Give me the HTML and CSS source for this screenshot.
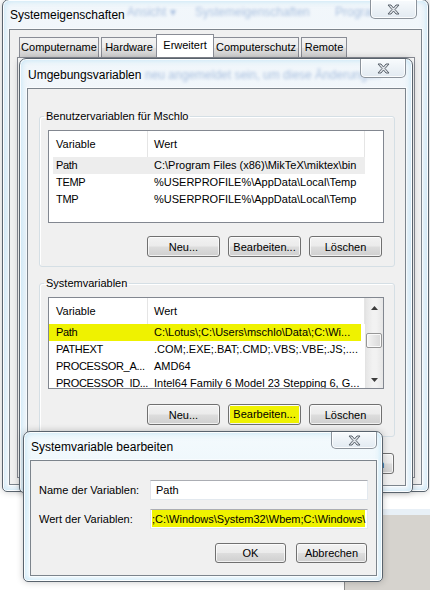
FILE: index.html
```html
<!DOCTYPE html>
<html lang="de">
<head>
  <meta charset="UTF-8">
  <meta name="viewport" content="width=device-width, initial-scale=1.0">
  <title>Umgebungsvariablen</title>
  <link rel="stylesheet" href="styles.css">
</head>
<body>
  <!-- window lying behind, lower right -->
  <div class="back-window"></div>

  <!-- Systemeigenschaften -->
  <div class="window sys-window">
    <div class="titlebar">
      <span class="title">Systemeigenschaften</span>
      <span class="ghost" style="left: 118px; top: 5px;">Ansicht ▾</span>
      <span class="ghost" style="left: 186px; top: 5px;">Systemeigenschaften</span>
      <span class="ghost" style="left: 326px; top: 5px;">Programme</span>
      <div class="close-btn">
        <svg width="13" height="11" viewBox="0 0 13 11"><path d="M1 1h3l2.5 3 2.5-3h3l-4 4.5 4 4.5h-3l-2.5-3-2.5 3h-3l4-4.5z"/></svg>
      </div>
    </div>
    <div class="client">
      <div class="tabs">
        <div class="tab tab-name">Computername</div>
        <div class="tab tab-hw">Hardware</div>
        <div class="tab tab-adv active">Erweitert</div>
        <div class="tab tab-prot">Computerschutz</div>
        <div class="tab tab-remote">Remote</div>
      </div>
      <div class="tab-panel"></div>
    </div>
  </div>

  <!-- Umgebungsvariablen -->
  <div class="window env-window">
    <div class="titlebar">
      <span class="title">Umgebungsvariablen</span>
      <span class="ghost" style="left: 118px; top: 9px;">neu angemeldet sein, um diese Änderungen</span>
      <div class="close-btn">
        <svg width="13" height="11" viewBox="0 0 13 11"><path d="M1 1h3l2.5 3 2.5-3h3l-4 4.5 4 4.5h-3l-2.5-3-2.5 3h-3l4-4.5z"/></svg>
      </div>
    </div>
    <div class="client env-client">
      <fieldset class="group">
        <legend>Benutzervariablen für Mschlo</legend>
        <div class="listview">
          <div class="lv-main">
            <div class="lv-header">
              <div class="lv-col col-name">Variable</div>
              <div class="lv-col col-value">Wert</div>
              <div class="lv-col col-rest"></div>
            </div>
            <div class="lv-row selected"><span class="cell-name">Path</span><span class="cell-value">C:\Program Files (x86)\MikTeX\miktex\bin</span></div>
            <div class="lv-row"><span class="cell-name">TEMP</span><span class="cell-value">%USERPROFILE%\AppData\Local\Temp</span></div>
            <div class="lv-row"><span class="cell-name">TMP</span><span class="cell-value">%USERPROFILE%\AppData\Local\Temp</span></div>
          </div>
        </div>
        <div class="button-row">
          <button class="btn">Neu...</button>
          <button class="btn">Bearbeiten...</button>
          <button class="btn">Löschen</button>
        </div>
      </fieldset>

      <fieldset class="group group-system">
        <legend>Systemvariablen</legend>
        <div class="listview">
          <div class="lv-main">
            <div class="lv-header">
              <div class="lv-col col-name">Variable</div>
              <div class="lv-col col-value">Wert</div>
            </div>
            <div class="lv-row marked"><span class="cell-name">Path</span><span class="cell-value">C:\Lotus\;C:\Users\mschlo\Data\;C:\Wi...</span></div>
            <div class="lv-row"><span class="cell-name">PATHEXT</span><span class="cell-value">.COM;.EXE;.BAT;.CMD;.VBS;.VBE;.JS;....</span></div>
            <div class="lv-row"><span class="cell-name">PROCESSOR_A...</span><span class="cell-value">AMD64</span></div>
            <div class="lv-row"><span class="cell-name">PROCESSOR_ID...</span><span class="cell-value">Intel64 Family 6 Model 23 Stepping 6, G...</span></div>
          </div>
          <div class="scrollbar">
            <div class="sb-arrow sb-up">
              <svg width="7" height="4" viewBox="0 0 7 4"><path d="M0 4h7L3.5 0z"/></svg>
            </div>
            <div class="sb-track">
              <div class="sb-thumb"></div>
            </div>
            <div class="sb-arrow sb-down">
              <svg width="7" height="4" viewBox="0 0 7 4"><path d="M0 0h7L3.5 4z"/></svg>
            </div>
          </div>
        </div>
        <div class="button-row">
          <button class="btn">Neu...</button>
          <button class="btn"><span class="marker">Bearbeiten...</span></button>
          <button class="btn">Löschen</button>
        </div>
      </fieldset>

      <div class="dialog-buttons env-buttons">
        <button class="btn">OK</button>
        <button class="btn">Abbrechen</button>
      </div>
    </div>
  </div>

  <!-- Systemvariable bearbeiten -->
  <div class="window edit-window">
    <div class="titlebar">
      <span class="title">Systemvariable bearbeiten</span>
      <div class="close-btn">
        <svg width="13" height="11" viewBox="0 0 13 11"><path d="M1 1h3l2.5 3 2.5-3h3l-4 4.5 4 4.5h-3l-2.5-3-2.5 3h-3l4-4.5z"/></svg>
      </div>
    </div>
    <div class="client edit-client">
      <div class="field-row">
        <label class="field-label">Name der Variablen:</label>
        <div class="textbox">Path</div>
      </div>
      <div class="field-row">
        <label class="field-label">Wert der Variablen:</label>
        <div class="textbox"><span class="marker value-marker">;C:\Windows\System32\Wbem;C:\Windows\</span></div>
      </div>
      <div class="dialog-buttons edit-buttons">
        <button class="btn">OK</button>
        <button class="btn">Abbrechen</button>
      </div>
    </div>
  </div>
</body>
</html>
```

FILE: styles.css
```css
body, html {
  margin: 0;
  padding: 0;
}

body {
  position: relative;
  width: 430px;
  height: 590px;
  overflow: hidden;
  background: #ffffff;
  font-family: "Liberation Sans", Arial, sans-serif;
  font-size: 12px;
  color: #000;
}

.back-window {
  position: absolute;
  left: 344px;
  top: 509px;
  right: -10px;
  bottom: -10px;
  background: #d6d3ce;
  border-top: 6px solid #e8f0f7;
  border-left: 1px solid #8c8c8c;
}

/* Aero window frame */
.window {
  position: absolute;
  box-sizing: border-box;
  display: flex;
  flex-direction: column;
  border: 1px solid #59636d;
  border-radius: 7px 7px 5px 5px;
  background: linear-gradient(180deg, #f2f7fb 0%, #e8f1f8 45%, #f4f8fc 100%);
  box-shadow: inset 0 0 0 1px rgba(255, 255, 255, 0.9),
              inset 0 0 6px 1px rgba(150, 210, 240, 0.55),
              0 0 7px rgba(0, 0, 0, 0.22);
}

.sys-window {
  left: 2px;
  top: -1px;
  width: 427px;
  height: 493px;
  padding: 0 6px 6px 6px;
}

.env-window {
  left: 19px;
  top: 58px;
  width: 394px;
  height: 435px;
  padding: 0 6px 6px 7px;
}

.edit-window {
  left: 23px;
  top: 431px;
  width: 360px;
  height: 151px;
  padding: 0 5px 5px 6px;
  background: linear-gradient(180deg, #f4fafd 0%, #eaf5fb 45%, #f6fbfe 100%);
}

.titlebar {
  position: relative;
  height: 29px;
  flex-shrink: 0;
  display: flex;
  align-items: center;
  overflow: hidden;
}

.env-window .titlebar {
  padding-top: 2px;
  box-sizing: border-box;
}

.edit-window .titlebar {
  height: 28px;
  padding-top: 2px;
  box-sizing: border-box;
}

.title {
  position: relative;
  z-index: 1;
  margin-left: 1px;
  white-space: nowrap;
}

/* blurred text of windows behind the glass */
.ghost {
  position: absolute;
  white-space: nowrap;
  color: rgba(60, 110, 185, 0.4);
  filter: blur(1.4px);
}

.close-btn {
  position: absolute;
  z-index: 2;
  top: 0;
  right: 0;
  box-sizing: border-box;
  width: 47px;
  height: 19px;
  display: flex;
  align-items: center;
  justify-content: center;
  border: 1px solid rgba(70, 80, 92, 0.6);
  border-top: none;
  border-radius: 0 0 5px 5px;
  background: linear-gradient(180deg, #f8fbfd, #e2eaf1);
  box-shadow: inset 0 0 0 1px rgba(255, 255, 255, 0.85);
}

.close-btn svg path {
  fill: #dfe3e8;
  stroke: #5b636c;
  stroke-width: 1;
  stroke-linejoin: round;
}

.sys-window .close-btn {
  right: 5px;
}

.env-window .close-btn {
  width: 46px;
}

.edit-window .close-btn {
  width: 46px;
  height: 17px;
}

/* client area */
.client {
  flex: 1;
  min-height: 0;
  display: flex;
  flex-direction: column;
  border: 1px solid #7c848c;
  background: #f0f0f0;
  box-shadow: 0 0 0 1px rgba(255, 255, 255, 0.6);
  font-size: 11px;
}

/* property sheet tabs */
.tabs {
  display: flex;
  align-items: flex-end;
  height: 20px;
  margin: 7px 0 0 9px;
}

.tab {
  box-sizing: border-box;
  height: 20px;
  margin-right: 2px;
  line-height: 19px;
  text-align: center;
  border: 1px solid #898c95;
  border-bottom: none;
  background: linear-gradient(180deg, #f3f3f3 0%, #ebebeb 50%, #dedede 51%, #d2d2d2 100%);
  white-space: nowrap;
}

.tab-name { width: 80px; }
.tab-hw { width: 56px; }
.tab-adv { width: 58px; }
.tab-prot { width: 86px; }
.tab-remote { width: 46px; }

.tab.active {
  position: relative;
  z-index: 1;
  height: 23px;
  margin: 0 -1px 0 -1px;
  line-height: 21px;
  background: #ffffff;
}

.tab-hw {
  margin-right: 0;
}

.tab-panel {
  flex: 1;
  margin: 0 6px 6px 7px;
  border: 1px solid #898c95;
  background: #ffffff;
}

/* group boxes */
.env-client {
  padding: 20px 10px 0 11px;
}

.group {
  margin: 0;
  min-width: 0;
  padding: 7px 10px 9px 8px;
  border: 1px solid #d5dfe5;
  border-radius: 3px;
  box-shadow: inset 1px 1px 0 #ffffff;
}

.group legend {
  margin-left: -4px;
  padding: 0 2px;
  line-height: 14px;
}

.group-system {
  margin-top: 9px;
  padding-bottom: 11px;
}

/* list views */
.listview {
  box-sizing: border-box;
  height: 93px;
  display: flex;
  border: 1px solid #828790;
  background: #ffffff;
  overflow: hidden;
}

.group-system .listview {
  height: 92px;
}

.lv-main {
  flex: 1;
  min-width: 0;
}

.lv-header {
  display: flex;
  height: 26px;
  line-height: 26px;
}

.lv-col {
  box-sizing: border-box;
  border-right: 1px solid #e5e5e5;
}

.col-name {
  width: 99px;
  padding-left: 7px;
}

.col-value {
  flex: 1;
  padding-left: 6px;
}

.col-rest {
  width: 18px;
  border-right: none;
}

.lv-row {
  display: flex;
  height: 17px;
  line-height: 17px;
  margin: 0 18px 0 4px;
  white-space: nowrap;
}

.group-system .lv-row {
  margin-right: 0;
}

.lv-row.selected {
  background: #ededed;
}

.lv-row.marked {
  margin: 0 4px 0 0;
  padding-left: 4px;
  background: #eff200;
}

.cell-name {
  flex-shrink: 0;
  box-sizing: border-box;
  width: 95px;
  padding-left: 3px;
  letter-spacing: -0.3px;
}

.cell-value {
  flex: 1;
  min-width: 0;
  padding-left: 6px;
  overflow: hidden;
}

/* vertical scrollbar */
.scrollbar {
  width: 17px;
  display: flex;
  flex-direction: column;
  border-left: 1px solid #e3e3e3;
  background: linear-gradient(90deg, #e6e6e6, #f2f2f2 40%, #f2f2f2 60%, #e6e6e6);
}

.sb-arrow {
  height: 19px;
  display: flex;
  align-items: center;
  justify-content: center;
}

.sb-down {
  height: 16px;
}

.sb-arrow svg path {
  fill: #3c3c3c;
}

.sb-track {
  flex: 1;
}

.sb-thumb {
  box-sizing: border-box;
  height: 15px;
  margin: 16px 1px 0 0;
  border: 1px solid #979797;
  border-radius: 2px;
  background: linear-gradient(90deg, #f4f4f4, #e6e6e6 50%, #d9d9d9);
  box-shadow: inset 0 0 0 1px #fafafa;
}

/* push buttons */
.button-row,
.dialog-buttons {
  display: flex;
  justify-content: flex-end;
  gap: 8px;
}

.button-row {
  margin: 13px 2px 0 0;
}

.group-system .button-row {
  margin-top: 15px;
}

.btn {
  box-sizing: border-box;
  width: 73px;
  height: 21px;
  padding: 0;
  border: 1px solid #707070;
  border-radius: 3px;
  background: linear-gradient(180deg, #f2f2f2 0%, #ebebeb 48%, #dddddd 52%, #cfcfcf 100%);
  box-shadow: inset 0 0 0 1px rgba(255, 255, 255, 0.7);
  font: inherit;
  color: #000;
}

.marker {
  display: inline-block;
  padding: 2px 3px;
  line-height: 13px;
  background: #eff200;
}

.env-buttons {
  margin: 16px 1px 0 0;
}

/* edit dialog */
.edit-client {
  padding: 19px 8px 0 8px;
}

.field-row {
  display: flex;
  align-items: center;
  margin-bottom: 9px;
}

.field-label {
  width: 111px;
  flex-shrink: 0;
}

.textbox {
  flex: 1;
  box-sizing: border-box;
  height: 20px;
  padding-left: 5px;
  line-height: 18px;
  border: 1px solid #abadb3;
  border-color: #abadb3 #e3e9ef #e3e9ef #e2e3ea;
  background: #ffffff;
  white-space: nowrap;
  overflow: hidden;
}

.value-marker {
  margin-left: -4px;
  padding: 1px 0 0 0;
  line-height: 16px;
}

.edit-buttons {
  gap: 10px;
  margin: 5px 1px 0 0;
}

.edit-buttons .btn {
  width: 71px;
  height: 20px;
}
```
